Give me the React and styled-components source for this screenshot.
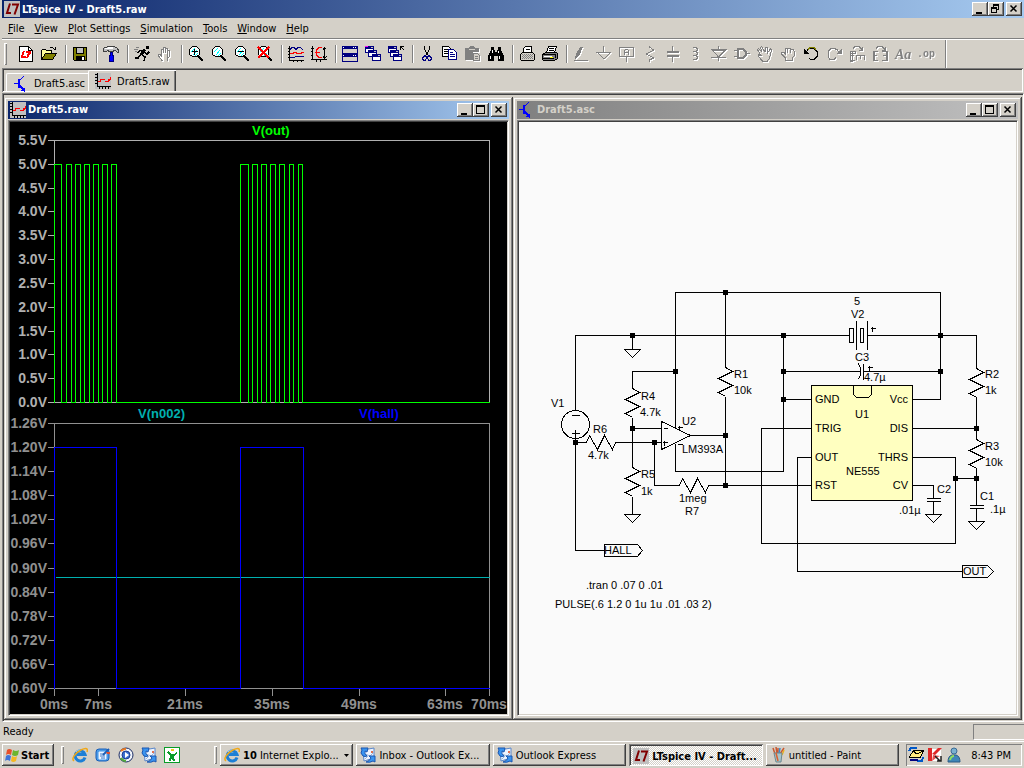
import React from "react";
import styled, { createGlobalStyle, css } from "styled-components";

const GlobalStyle = createGlobalStyle`
  * {
    box-sizing: border-box;
  }

  html, body, #root {
    height: 100%;
  }

  body {
    margin: 0;
    background: #d4d0c8;
    font-family: "DejaVu Sans Condensed", "Noto Sans", sans-serif;
    font-size: 11px;
    color: #000;
  }

  button {
    font: inherit;
    color: inherit;
    margin: 0;
    padding: 0;
    border: 0;
    background: none;
    text-align: left;
  }
`;

const raised = css`
  background: #d4d0c8;
  box-shadow: inset -1px -1px #404040, inset 1px 1px #fff,
    inset -2px -2px #808080;
`;

const sunken = css`
  box-shadow: inset 1px 1px #808080, inset -1px -1px #fff,
    inset 2px 2px #404040;
`;

const Desktop = styled.div`
  display: flex;
  flex-direction: column;
  height: 100vh;
  overflow: hidden;
`;

const TitleBar = styled.header`
  display: flex;
  align-items: center;
  flex: none;
  height: 18px;
  padding: 0 2px;
  margin-left: ${p => (p.$main ? "2px" : "0")};
  gap: 2px;
  color: ${p => (p.$inactive ? "#d4d0c8" : "#fff")};
  background: ${p =>
    p.$inactive
      ? "linear-gradient(90deg, #808080, #c0c0c0)"
      : "linear-gradient(90deg, #0a246a, #a6caf0)"};

  > h1,
  > h2 {
    flex: 1;
    min-width: 0;
    margin: 0;
    font-size: 11px;
    line-height: 18px;
    font-weight: bold;
    white-space: nowrap;
    overflow: hidden;
  }

  > h1 {
    padding-top: 1px;
  }
`;

const CaptionButtons = styled.div`
  display: flex;

  > button {
    ${raised}
    width: 16px;
    height: 14px;
  }

  > button:last-child {
    margin-left: 2px;
  }

  svg {
    display: block;
  }
`;

const MenuBar = styled.nav`
  display: flex;
  flex: none;
  height: 20px;
  padding-left: 3px;

  > button {
    padding: 0 5px;
    line-height: 22px;
  }
`;

const ToolBar = styled.div`
  display: flex;
  align-items: center;
  flex: none;
  height: 30px;
  margin-left: 2px;
  border-top: 1px solid #808080;
  box-shadow: inset 0 1px #fff;
  padding: 1px 0 0 2px;
`;

const Grip = styled.span`
  flex: none;
  width: 3px;
  height: ${p => p.$h || 22}px;
  box-shadow: inset 1px 1px #fff, inset -1px -1px #808080;
`;

const ToolGroup = styled.div`
  display: flex;
  align-items: center;
  border-right: 1px solid #808080;
  box-shadow: 1px 0 #fff;
  height: 18px;
  padding: 0 4px 0 3px;

  &:first-of-type {
    padding-left: 8px;
  }

  &:last-of-type {
    height: 28px;
    padding-right: 7px;
  }
`;

const ToolButton = styled.button`
  width: 23px;
  height: 22px;
  padding: 3px;

  svg {
    display: block;
    overflow: visible;
    filter: ${p => (p.disabled ? "drop-shadow(1px 1px 0 #fff)" : "none")};
  }
`;

const TabStrip = styled.div`
  ${sunken}
  display: flex;
  align-items: flex-end;
  flex: none;
  height: 24px;
  margin: 0 1px 1px 2px;
  padding: 2px 4px 1px;
`;

const Tab = styled.button`
  display: flex;
  align-items: center;
  gap: ${p => (p.$active ? 6 : 4)}px;
  height: ${p => (p.$active ? 21 : 18)}px;
  padding: ${p => (p.$active ? "0 6px" : "2px 3px 0 7px")};
  border-top: 1px solid #fff;
  border-left: 1px solid #fff;
  border-radius: 2px 0 0 0;
  box-shadow: ${p =>
    p.$active ? "inset -1px 0 #404040, inset -2px 0 #808080" : "none"};
`;

const MdiArea = styled.main`
  flex: 1;
  min-height: 0;
  display: grid;
  grid-template-columns: 1fr 1fr;
  margin-left: 2px;
  padding: 3px 1px 1px;
  border: 1px solid #808080;
  border-right-color: #fff;
  border-bottom-color: #fff;
  box-shadow: inset 1px 1px #404040;
`;

const ChildWindow = styled.section`
  display: flex;
  flex-direction: column;
  min-width: 0;
  min-height: 0;
  padding: 4px;
  box-shadow: inset -1px -1px #404040, inset 1px 1px #d4d0c8,
    inset -2px -2px #808080, inset 2px 2px #fff;
`;

const Canvas = styled.div`
  flex: 1;
  min-height: 0;
  margin-top: 1px;
  border: 1px solid #808080;
  border-right-color: #fff;
  border-bottom-color: #fff;
  padding: 1px;
  box-shadow: inset 1px 1px #404040;

  > svg {
    display: block;
    width: 100%;
    height: 100%;
    background: ${p => p.$color};
  }
`;

const AxisText = styled.text`
  font: bold 14px "Liberation Sans", Arial, sans-serif;
`;

const TraceText = styled.text`
  font: bold 13px "Liberation Sans", Arial, sans-serif;
`;

const PartText = styled.text`
  font: 11px "Liberation Sans", Arial, sans-serif;
`;

const StatusBar = styled.footer`
  display: flex;
  align-items: center;
  justify-content: space-between;
  flex: none;
  height: 19px;
  padding-left: 3px;

  > span {
    width: 51px;
    height: 16px;
    border-top: 1px solid #808080;
    border-left: 1px solid #808080;
    border-bottom: 1px solid #fff;
  }
`;

const TaskBar = styled.div`
  display: flex;
  align-items: center;
  flex: none;
  height: 27px;
  border-top: 1px solid #fff;
  padding: 1px 2px;
`;

const StartButton = styled.button`
  ${raised}
  display: flex;
  align-items: center;
  gap: 1px;
  width: 52px;
  height: 22px;
  padding: 0 2px;
  font-weight: bold;
  margin-right: 7px;
`;

const QuickLaunch = styled.div`
  display: flex;
  gap: 7px;
  width: 150px;
  padding-left: 8px;

  svg {
    display: block;
  }
`;

const TaskList = styled.div`
  display: flex;
  flex: 1;
  min-width: 0;
  gap: 3px;
  margin: 0 7px 0 3px;
`;

const TaskButton = styled.button`
  ${raised}
  display: flex;
  align-items: center;
  gap: 3px;
  flex: 1;
  min-width: 0;
  height: 22px;
  padding: 0 4px;

  > svg {
    flex: none;
  }

  > span {
    flex: 1;
    white-space: nowrap;
    overflow: hidden;
    text-overflow: ellipsis;
  }

  ${p =>
    p.$active &&
    css`
      ${sunken}
      font-weight: bold;
      padding-top: 2px;
      background: repeating-conic-gradient(#fff 0 25%, #d4d0c8 0 50%) 0 0 / 2px
        2px;
    `}
`;

const Tray = styled.div`
  display: flex;
  align-items: center;
  gap: 3px;
  width: 116px;
  height: 22px;
  padding: 0 2px;
  box-shadow: inset 1px 1px #808080, inset -1px -1px #fff;

  > time {
    flex: 1;
    text-align: right;
    padding-right: 9px;
    white-space: nowrap;
  }
`;

/* ---------- icons ---------- */

const Icon = ({ children, smooth }) => (
  <svg
    width="16"
    height="16"
    viewBox="0 0 16 16"
    fill="none"
    stroke="#000"
    shapeRendering={smooth ? "auto" : "crispEdges"}
    aria-hidden="true"
  >
    {children}
  </svg>
);

const LtLogo = () => (
  <Icon smooth>
    <path d="M0 0h16v16H0z" fill="#c0c0c0" stroke="none" />
    <path d="M6 2.500L3 12H7" stroke="#800000" strokeWidth="2" />
    <path d="M8 3.500H14L10.500 13.500" stroke="#800000" strokeWidth="2" />
  </Icon>
);

const WaveIcon = () => (
  <Icon>
    <path d="M0 0h16v16H0z" fill="#c0c0c0" stroke="none" />
    <path d="M2.500 0v13.500M2 13.500h14M0 1.500h2M0 4.500h2M0 7.500h2M0 10.500h2M4.500 14v2M7.500 14v2M10.500 14v2M13.500 14v2" />
    <path d="M3 8h2v-2h5v2h3v-2h2v-2h1v3h-1v1h-1v1h-4v-2h-4v2h-3z" fill="#f00" stroke="none" />
  </Icon>
);

const TransistorIcon = () => (
  <Icon>
    <path d="M0 7.500h4M10 0l-5 5" stroke="#00f" />
    <path d="M4 3h2v9H4zM6 9h1v1h1v1h1v1h2v4h-1v-1H7v-1h1v-1H7v-1H6z" fill="#00f" stroke="none" />
  </Icon>
);

const Lens = ({ children }) => (
  <Icon>
    <path d="M4 1h5l3 3v4l-3 3H5L1 8V4z" fill="#fff" stroke="none" />
    <path d="M3 6l4-4M5 9l4-5M7 10l3-3" stroke="#0ff" />
    <path d="M4 .500h5M3.500 1v1M9.500 1v1M2 2.500h1M10 2.500h1M1.500 3v6M11.500 3v6M2 9.500h2M9 9.500h2M4 10.500h5" />
    <path d="M10 10l5 5" strokeWidth="2" />
    {children}
  </Icon>
);

const MiniWindow = ({ x, y }) => (
  <g>
    <path d={`M${x} ${y}h9v7h-9z`} fill="#000080" stroke="none" />
    <path d={`M${x + 1} ${y + 3}h7v3h-7z`} fill="#fff" stroke="none" />
    <path d={`M${x + 6} ${y + 1}h2v1h-2z`} fill="#c0c0c0" stroke="none" />
  </g>
);

const hand =
  "M5.500 15L1.500 10V8.500H3L4.500 10V3.500H6V7M6.500 7V1.500H8V7M8.500 7V2.500H10V8M10.500 8V4.500H12V11L10.500 13V15z";

const icons = {
  newFile: (
    <Icon>
      <path d="M1.500 .500h9l4 4v11h-13z" fill="#fff" />
      <path d="M10.500 .500v4h4" />
      <path
        d="M5 5h2l-2 5h3v2H3v-2zM8 5h5v2l-3 5H8l2-5H8z"
        fill="#f00"
        stroke="none"
      />
    </Icon>
  ),
  open: (
    <Icon>
      <path d="M.500 13.500v-9l1-1h3l1 1h5v3" fill="#ffff9c" />
      <path d="M.500 13.500l4-6h11l-4 6z" fill="#808000" />
      <path d="M9 1.500h3M12 2.500h1M13 3.500h2M14.500 1v3" />
    </Icon>
  ),
  save: (
    <Icon>
      <path d="M1.500 1.500h13v13h-12l-1-1z" fill="#808000" />
      <path d="M4 2h8v6H4z" fill="#c0c0c0" stroke="none" />
      <path d="M4 10h9v4H4z" fill="#000" stroke="none" />
      <path d="M10 11h2v3h-2z" fill="#fff" stroke="none" />
      <path d="M4.500 2v5.500h7V2" />
    </Icon>
  ),
  hammer: (
    <Icon>
      <path
        d="M.500 2.500l1-1h2l1-1h7l3 2 1 2v2h-1l-2-2h-2v1h-5v-1h-1l-1 1h-3z"
        fill="#c0c0c0"
        stroke="#404040"
      />
      <path d="M2 2.500h8M5 1.500h5" stroke="#fff" />
      <path d="M7.500 6h2v3h1v6h-4v-6h1z" fill="#00f" stroke="#000080" />
    </Icon>
  ),
  run: (
    <Icon>
      <path d="M12 0h3v3h-3z" fill="#000" stroke="none" />
      <path d="M10.500 3.500L7 9" strokeWidth="3" />
      <path d="M9 4.500H5.500L4 7M10 6l3 2 2-2M8 9l3 2-1 4M6 9l-2 3H1" strokeWidth="1.500" />
      <path d="M2 1h3M0 3h4M1 5h2" stroke="#808080" />
    </Icon>
  ),
  hand: (
    <Icon>
      <path d={hand} fill="#fff" stroke="#808080" />
    </Icon>
  ),
  zoomIn: (
    <Lens>
      <path d="M3.500 5.500h6M6.500 3v6" />
    </Lens>
  ),
  zoomPan: <Lens />,
  zoomOut: (
    <Lens>
      <path d="M3.500 5.500h6" />
    </Lens>
  ),
  zoomFit: (
    <Lens>
      <path d="M1 1l11 11M12 1L1 12" stroke="#f00" strokeWidth="1.500" />
    </Lens>
  ),
  autoRange: (
    <Icon>
      <path d="M1.500 0v14.500M1 14.500h15M0 2.500h2M0 5.500h2M0 8.500h2M0 11.500h2M5.500 14v2M9.500 14v2M13.500 14v2" />
      <path d="M2 3.500l2-2h2l2 2 2-2h2l3 2M2 11.500h4l2-1h8" stroke="#000080" />
      <path d="M2 7.500h3v-1h3v1h5v-1h3" stroke="#f00" />
    </Icon>
  ),
  yRange: (
    <Icon>
      <path d="M1.500 0v13.500M0 13.500h16M0 2.500h3M0 5.500h2M0 9.500h2M5.500 13v3M9.500 13v3M13.500 1v12M12 3.500l1.500-2 2 2M12 10.500l1.500 2 2-2" />
      <path d="M11 1.500H8L5.500 4v5L8 11.500h3M4 6.500h5" stroke="#f00" />
    </Icon>
  ),
  tile: (
    <Icon>
      <path d="M0 0h16v16H0z" fill="#000080" stroke="none" />
      <path d="M1 3h14v4H1zM1 11h14v4H1z" fill="#d4d0c8" stroke="none" />
      <path d="M11 1.500h1M13 1.500h1M11 9.500h1M13 9.500h1M1 1.500h1M1 9.500h1" stroke="#fff" />
    </Icon>
  ),
  cascade: (
    <Icon>
      <MiniWindow x={0} y={0} />
      <MiniWindow x={3} y={4} />
      <MiniWindow x={7} y={8} />
      <path d="M0 .500h3" stroke="#f0f" />
    </Icon>
  ),
  closeAll: (
    <Icon>
      <MiniWindow x={0} y={0} />
      <MiniWindow x={2} y={4} />
      <MiniWindow x={5} y={8} />
      <path d="M12.500 4V.500H16M13 1l3 3" />
    </Icon>
  ),
  cut: (
    <Icon>
      <path d="M5.500 0v3l3 6M10.500 0v3l-3 6" />
      <path d="M4.500 10.500l2-1 1 2-1 3h-2l-1-2zM9.500 9.500l2 1 1 2-1 2h-2l-1-3z" stroke="#000080" />
    </Icon>
  ),
  copy: (
    <Icon>
      <path d="M.500 .500h6l2 2v8h-8z" fill="#fff" />
      <path d="M2 3.500h4M2 5.500h5M2 7.500h5" />
      <path d="M6.500 3.500h5l3 3v7h-8z" fill="#fff" stroke="#000080" />
      <path d="M8 6.500h3M8 8.500h5M8 10.500h5" stroke="#000080" />
    </Icon>
  ),
  paste: (
    <Icon>
      <path d="M0 2h4l1-2h4l1 2h4v4H8v8H0z" fill="#808080" stroke="none" />
      <path d="M4 3.500h6" stroke="#d4d0c8" />
      <path d="M8.500 7.500h4l2 2v5h-6z" fill="#d4d0c8" stroke="#808080" />
      <path d="M10 10.500h3M10 12.500h3" stroke="#808080" />
    </Icon>
  ),
  find: (
    <Icon>
      <path
        d="M3 1h3v3h1v2h2V4h1V1h3v3l3 6v5h-6v-5H6v5H0v-5l3-6z"
        fill="#000"
        stroke="none"
      />
      <path d="M4.500 4v3M2.500 10v3M10.500 5v2M11.500 10v3" stroke="#fff" />
    </Icon>
  ),
  printSetup: (
    <Icon>
      <path d="M4.500 6.500v-4l2-2h6v6" fill="#fff" />
      <path d="M1.500 8.500l2-2h10l2 2v5l-1 1h-12l-1-1z" fill="#d4d0c8" />
      <path d="M3 8.500h11M3 10.500h11M3 12.500h11" stroke="#808080" strokeDasharray="1 1" />
      <path d="M4 9.500h10M4 11.500h10" stroke="#808080" strokeDasharray="1 1" />
      <path d="M7 3.500h4" />
    </Icon>
  ),
  print: (
    <Icon>
      <path d="M4.500 6.500l2-6h8l-2 6z" fill="#fff" />
      <path d="M7 2.500h5M7 4.500h5" />
      <path d="M.500 8.500l3-2h11l1 1v5l-3 2h-11l-1-1z" fill="#808080" />
      <path d="M1 8.500h12v3M1 12.500h11" />
      <path d="M2 10.500h8" stroke="#fff" />
      <path d="M8 11h3v1H8z" fill="#ff0" stroke="none" />
    </Icon>
  ),
  wire: (
    <Icon>
      <path d="M7 1h3L6 10l-4 3 1-5z" fill="#808080" stroke="none" />
      <path d="M1 14.500h14" stroke="#808080" />
    </Icon>
  ),
  ground: (
    <Icon>
      <path d="M7.500 0v6M0 6.500h15M2 7l6 6 6-6" stroke="#808080" />
    </Icon>
  ),
  label: (
    <Icon>
      <path d="M.500 1.500h14v9H.500zM7.500 11v5M5.500 9V4.500l1-1h2l1 1V9M6 6.500h3" stroke="#808080" />
    </Icon>
  ),
  resistor: (
    <Icon>
      <path d="M7.500 0v1l4 3-7 4 7 4-4 2v2" stroke="#808080" />
    </Icon>
  ),
  capacitor: (
    <Icon>
      <path d="M7.500 0v5M7.500 10v6" stroke="#808080" />
      <path d="M2 6h12M2 10h12" stroke="#808080" strokeWidth="2" />
    </Icon>
  ),
  inductor: (
    <Icon>
      <path
        d="M5 1.500h3l1 1v2l-1 1H5M6 5.500h2l1 1v2l-1 1H5M6 9.500h2l1 1v2l-1 1H5"
        stroke="#808080"
      />
    </Icon>
  ),
  diode: (
    <Icon>
      <path d="M7.500 0v3M1 3.500h14L7.500 11zM0 11.500h15M7.500 11v4" stroke="#808080" />
      <path d="M2 4h12" stroke="#808080" strokeWidth="2" />
    </Icon>
  ),
  gate: (
    <Icon>
      <path d="M0 4.500h4M0 10.500h4M12 7.500h4" stroke="#808080" />
      <path d="M4 3h5l3 3v3l-3 3H4z" stroke="#808080" strokeWidth="2" />
    </Icon>
  ),
  move: (
    <Icon>
      <path
        d="M5.500 15L1 10V8.500l3 1L.500 3.500l1-1L5 6 3.500 1.500l1-1L8 6l1-4.500h1.500V7l3-4 1 1-2 8-2 3z"
        stroke="#808080"
      />
    </Icon>
  ),
  drag: (
    <Icon>
      <path d="M5.500 14v-2L1.500 8V6.500H4l1 1V3l1-1 2 1 2-1 1 1h2l1 2v5l-2 2v2zM7.500 3v4M10.500 3v4" stroke="#808080" />
    </Icon>
  ),
  undo: (
    <Icon>
      <path d="M3 6.500l2-3 2-1h4l3 3v5l-3 3H8l-2-1" />
      <path d="M5 3.500l2-2h4l2 2" stroke="#808000" />
      <path d="M1 3v5h5z" fill="#000" stroke="none" />
    </Icon>
  ),
  redo: (
    <Icon>
      <path d="M13 6.500l-2-3-3-1H5l-3 3v5l2 3h4l2-2" stroke="#808080" />
      <path d="M15.500 3v5h-5z" fill="#808080" stroke="none" />
    </Icon>
  ),
  rotate: (
    <Icon>
      <path d="M4 2.500l2-2h4l3 3M13.500 1v3H10" stroke="#808080" />
      <path d="M6 5.500H1V7h5zM1 5v10h2V5zM1 9.500h4M1 14.500h5M7 9.500h9M7.500 9v5M11.500 9v4M15.500 9v5" stroke="#808080" />
    </Icon>
  ),
  mirror: (
    <Icon>
      <path d="M4 2.500l2-2h4l3 3M13.500 1v3H10" stroke="#808080" />
      <path d="M1 5.500h5M1 5v10M2 5v10M1 9.500h4M1 14.500h5M10 5.500h5M14 5v10M15 5v10M11 9.500h4M10 14.500h5" stroke="#808080" />
    </Icon>
  ),
  text: (
    <svg width="16" height="16" viewBox="0 0 16 16" aria-hidden="true">
      <text
        x="0"
        y="13"
        fill="#808080"
        fontFamily="Liberation Serif, serif"
        fontSize="14"
        fontWeight="bold"
        fontStyle="italic"
      >
        Aa
      </text>
    </svg>
  ),
  directive: (
    <svg width="16" height="16" viewBox="0 0 16 16" aria-hidden="true">
      <text
        x="-1"
        y="11"
        fill="#808080"
        fontFamily="Liberation Mono, monospace"
        fontSize="10"
        fontWeight="bold"
      >
        .op
      </text>
    </svg>
  )
};

const StartFlag = () => (
  <Icon smooth>
    <g stroke="none">
      <path d="M3 3q2-2 5 0L7 8q-3-2-5 0z" fill="#e8502a" />
      <path d="M9 3q3 2 6 0l-1 5q-3 2-6 0z" fill="#6cb52d" />
      <path d="M2 9q2-2 5 0l-1 5q-3-2-5 0z" fill="#3f74d8" />
      <path d="M8 9q3 2 5 0l-1 5q-3 2-5 0z" fill="#f5b820" />
    </g>
  </Icon>
);

const IeIcon = () => (
  <Icon smooth>
    <path d="M13 10.500a5 5 0 1 1 0-3H5" stroke="#1c7fd6" strokeWidth="3" />
    <path d="M4 5q1-2 4-2" stroke="#8fd0ff" />
    <path d="M2 14C-1 12 3 6 9 3s7-1 6 2" stroke="#f0a818" strokeWidth="1.500" />
  </Icon>
);

const DesktopIcon = () => (
  <Icon smooth>
    <rect x="1" y="2" width="13" height="12" rx="3" fill="#4a9be8" stroke="#1a5fb8" />
    <path d="M4 5h7v7H4z" fill="#fff" stroke="#dbeaff" />
    <path d="M5 7h4M5 9h5M6 11h4" stroke="#2f6fc4" />
    <path d="M8 8l6-6" stroke="#1a5fb8" strokeWidth="2" />
    <path d="M11 5h4v2h-3z" fill="#e05030" stroke="none" />
  </Icon>
);

const MediaIcon = () => (
  <Icon smooth>
    <circle cx="8" cy="8" r="7" fill="#f0f4fa" stroke="#1e2f66" />
    <path d="M3 4a6 6 0 0 1 5-2" stroke="#e87820" strokeWidth="2" />
    <path d="M3 11a6 6 0 0 0 5 3" stroke="#4fa83a" strokeWidth="2" />
    <circle cx="8" cy="8" r="4" fill="#3a6fd0" stroke="#1c3c90" />
    <path d="M7 5l4 3-4 3z" fill="#fff" stroke="none" />
  </Icon>
);

const OutlookIcon = () => (
  <Icon smooth>
    <path d="M3 3l11-2v10L4 14z" fill="#eef4ff" stroke="#5a86c8" />
    <path d="M5 7l5 2 4-4M5 12l3-3" stroke="#9ab4d8" />
    <path d="M11 4h2v2h-2z" fill="#e07050" stroke="none" />
    <path d="M8 1H1l1 2-1 3 2 3q2 1 4 0Q4 7 5 4l2 1z" fill="#3a94f0" stroke="#1a56b0" />
    <path d="M9 9h6v6l-2-1q-3 2-7 1 4-1 5-4z" fill="#3a94f0" stroke="#1a56b0" />
  </Icon>
);

const FigureIcon = () => (
  <Icon>
    <path d="M.500 .500h15v15H.500z" fill="#fff" stroke="#0a9c28" />
    <path d="M7 2h3v2H7z" fill="#f0c818" stroke="none" />
    <path d="M4 4l3 3h3l2-2 1 1-3 3 1 5h-2l-1-3-1 3H5l1-5-3-4z" fill="#0a9c28" stroke="none" />
  </Icon>
);

const PaintIcon = () => (
  <Icon smooth>
    <path d="M5 7L3 1M8 7V1M10 7l4-6M7 7L6 0" stroke="#c85830" strokeWidth="1.500" />
    <path d="M9 7l1-6" stroke="#3a8ad0" strokeWidth="1.500" />
    <path d="M12 8l2-5" stroke="#e8b020" strokeWidth="1.500" />
    <path d="M4 6h8l-1 9H6z" fill="#a8c4c8" stroke="#6b8890" />
    <path d="M6 6l2 8" stroke="#d86030" strokeWidth="1.500" />
  </Icon>
);

const SyncTrayIcon = () => (
  <Icon>
    <path d="M1.500 9.500l4-6h10l-3 7h-11z" fill="#ffe880" />
    <path d="M5 4l4 3 6-3" />
    <path d="M1 4l2-3h6M9 14h5l1-4" stroke="#0058c8" strokeWidth="2" />
    <path d="M2 12h8v2H2z" fill="#000080" stroke="none" />
  </Icon>
);

const KasperskyIcon = () => (
  <Icon smooth>
    <path d="M1 2h13v12H1z" fill="#fff" stroke="none" />
    <path d="M1 1h4v13H1zM5 7l6-6h4l-7 7z" fill="#e02828" stroke="none" />
    <path d="M5 14l1-6 7 1-4 2z" fill="#e85050" stroke="none" />
    <path d="M8 9l5 5M14 9v5h-4" stroke="#202020" strokeWidth="1.500" />
  </Icon>
);

const MessengerIcon = () => (
  <Icon smooth>
    <circle cx="8" cy="4" r="3" fill="#7ab0d0" stroke="#3a6a94" />
    <path d="M2 15q0-6 4-7h4q4 1 4 7z" fill="#3f86b8" stroke="#2a5a84" />
    <path d="M4 13q1-4 4-4" stroke="#8fe060" strokeWidth="2" />
  </Icon>
);

/* ---------- window parts ---------- */

const WindowButtons = ({ restore }) => (
  <CaptionButtons>
    <button aria-label="Minimize">
      <svg width="16" height="14">
        <path d="M4 10h6v2H4z" />
      </svg>
    </button>
    <button aria-label={restore ? "Restore" : "Maximize"}>
      <svg width="16" height="14" fill="none" stroke="#000" shapeRendering="crispEdges">
        {restore ? (
          <>
            <path d="M5.500 5V2.500h5v5H9M3.500 5.500h5v5h-5z" />
            <path d="M5 3h6M3 6h6" strokeWidth="2" />
          </>
        ) : (
          <>
            <path d="M3.500 2.500h8v8h-8z" />
            <path d="M3 3h9" strokeWidth="2" />
          </>
        )}
      </svg>
    </button>
    <button aria-label="Close">
      <svg width="16" height="14" fill="none" stroke="#000" strokeWidth="1.500">
        <path d="M4.500 3.500l6 6M10.500 3.500l-6 6" />
      </svg>
    </button>
  </CaptionButtons>
);

/* ---------- waveform viewer ---------- */

// both drawings share one coordinate space, the viewBox picks the pane
const upperTicks = [140, 164, 188, 211, 235, 259, 283, 307, 331, 354, 378, 402];
const upperLabels = ["5.5V", "5.0V", "4.5V", "4.0V", "3.5V", "3.0V", "2.5V", "2.0V", "1.5V", "1.0V", "0.5V", "0.0V"];
const lowerTicks = [423, 447, 471, 495, 519, 543, 568, 592, 616, 640, 664, 688];
const lowerLabels = ["1.26V", "1.20V", "1.14V", "1.08V", "1.02V", "0.96V", "0.90V", "0.84V", "0.78V", "0.72V", "0.66V", "0.60V"];
const timeTicks = [
  [54, "0ms"],
  [98, "7ms"],
  [185, "21ms"],
  [272, "35ms"],
  [359, "49ms"],
  [445, "63ms"],
  [489, "70ms"]
];

const pulses = [
  [54, 61], [66, 71], [75, 80], [84, 89], [93, 98], [102, 107], [111, 116],
  [240, 248], [252, 257], [261, 266], [270, 275], [279, 284], [289, 293], [298, 302]
];

const outTrace =
  pulses.map(([a, b], i) => `${i ? "L" : "M"}${a} 402V164H${b}V402`).join("") +
  "H489";

const Waveforms = () => (
  <svg viewBox="10 122 497 592" role="img" aria-label="Waveforms">
    <g transform="translate(.5 .5)" fill="none" shapeRendering="crispEdges">
      <path d="M54 140H489V402H54z" stroke="#b0b0b0" />
      <path d={upperTicks.map(y => `M47 ${y}h7`).join("")} stroke="#b0b0b0" />
      <path d={outTrace} stroke="#0f0" />
      <path d="M54 423H489V688H54z" stroke="#909090" />
      <path d={lowerTicks.map(y => `M47 ${y}h7`).join("")} stroke="#909090" />
      <path d={timeTicks.map(t => `M${t[0]} 688v7`).join("")} stroke="#909090" />
      <path d="M55 577H489" stroke="#00b0b0" />
      <path d="M54 688V447H116V688H240V447H303V688H489" stroke="#00f" />
    </g>
    {upperTicks.map((y, i) => (
      <AxisText key={y} x="47" y={y + 5} textAnchor="end" fill="#b0b0b0">
        {upperLabels[i]}
      </AxisText>
    ))}
    {lowerTicks.map((y, i) => (
      <AxisText key={y} x="47" y={y + 5} textAnchor="end" fill="#909090">
        {lowerLabels[i]}
      </AxisText>
    ))}
    {timeTicks.map(([x, label]) => (
      <AxisText key={x} x={x} y="709" textAnchor="middle" fill="#909090">
        {label}
      </AxisText>
    ))}
    <TraceText x="252" y="135" fill="#0f0">V(out)</TraceText>
    <TraceText x="138" y="418" fill="#00b0b0">V(n002)</TraceText>
    <TraceText x="359" y="418" fill="#00f">V(hall)</TraceText>
  </svg>
);

/* ---------- schematic ---------- */

const wires = [
  "M575 410V335H849M867 335H976V368",
  "M675 427V292H940V399H912",
  "M632 335V349M675 371H632V388M632 417V467M632 428H661M632 496V514",
  "M575 438V550H604M575 442H586M615 442H661",
  "M690 435H725M725 292V367M725 396V485",
  "M654 442V485H679M708 485H811",
  "M675 443V471H783V335M783 399H811",
  "M783 371H860M863 371H940",
  "M811 428H761V543H955V457H912M955 478H976",
  "M811 457H797V571H962",
  "M912 428H976M976 396V439M976 467V505M976 508V521",
  "M912 485H933V498M933 501V514"
];

const junctions = [
  [632, 335], [783, 335], [940, 335], [725, 292], [675, 371], [783, 371],
  [940, 371], [783, 399], [632, 428], [976, 428], [725, 435], [575, 442],
  [654, 442], [725, 485], [955, 478], [976, 478]
];

const grounds = [[632, 349], [632, 514], [933, 514], [976, 521]];

const vertical = [[632, 388], [632, 467], [725, 367], [976, 368], [976, 439]];
const horizontal = [[586, 442], [679, 485]];

const plusSigns = [[664, 442], [679, 427], [872, 328], [869, 367]];

const partLabels = [
  [551, 407, "V1"], [593, 433, "R6"], [588, 459, "4.7k"],
  [641, 400, "R4"], [640, 416, "4.7k"], [641, 478, "R5"], [641, 495, "1k"],
  [682, 425, "U2"], [682, 453, "LM393A"], [734, 378, "R1"], [734, 394, "10k"],
  [679, 502, "1meg"], [685, 515, "R7"], [854, 305, "5"], [851, 318, "V2"],
  [855, 361, "C3"], [864, 381, "4.7µ"], [985, 378, "R2"], [985, 394, "1k"],
  [985, 450, "R3"], [985, 466, "10k"], [980, 500, "C1"], [990, 513, ".1µ"],
  [937, 493, "C2"], [899, 514, ".01µ"], [855, 418, "U1"], [846, 475, "NE555"],
  [815, 403, "GND"], [815, 432, "TRIG"], [815, 461, "OUT"], [815, 489, "RST"],
  [604, 554, "HALL"], [963, 575, "OUT"],
  [586, 589, ".tran 0 .07 0 .01"],
  [555, 608, "PULSE(.6 1.2 0 1u 1u .01 .03 2)"]
];

const rightPins = [[403, "Vcc"], [432, "DIS"], [461, "THRS"], [489, "CV"]];

const Schematic = () => (
  <svg viewBox="519 122 497 592" role="img" aria-label="Schematic">
    <g
      transform="translate(.5 .5)"
      fill="none"
      stroke="#000"
      shapeRendering="crispEdges"
    >
      <path d="M811 385H912V500H811z" fill="#ffffc0" />
      <path d="M853 385V394L856 397H868L871 394V385" />
      {wires.map(d => (
        <path key={d} d={d} />
      ))}
      {junctions.map(([x, y]) => (
        <rect key={`${x}-${y}`} x={x - 2} y={y - 2} width="4" height="4" fill="#000" />
      ))}
      {grounds.map(([x, y]) => (
        <path key={`${x}-${y}`} d={`M${x - 8} ${y}h16l-8 8z`} />
      ))}
      {vertical.map(([x, y]) => (
        <path key={`${x}-${y}`} d={`M${x} ${y}l7 4-14 7 14 7-14 7 7 4`} />
      ))}
      {horizontal.map(([x, y]) => (
        <path key={`${x}-${y}`} d={`M${x} ${y}l3-7 8 14 7-14 8 14 3-7`} />
      ))}
      {plusSigns.map(([x, y]) => (
        <path key={`${x}-${y}`} d={`M${x - 2} ${y}h5M${x} ${y - 2}v5`} />
      ))}
      <circle cx="575" cy="424" r="14" />
      <path d="M571 415H579M571 433H579M575 429V438" />
      <path d="M661 421L690 435L661 449z" />
      <path d="M663 428H667M677 444H682" />
      <path d="M849 328H853V342H849zM860 328H863V342H860zM856 320V349M867 320V349" />
      <path d="M858 363Q863 371 858 379M863 363V379" />
      <path d="M926 498H940M926 501H940M969 505H983M969 508H983" />
      <path d="M604 544H637L642 550L637 556H604zM962 565H987L993 571L987 577H962z" />
    </g>
    {partLabels.map(([x, y, label]) => (
      <PartText key={`${x}-${y}`} x={x} y={y}>
        {label}
      </PartText>
    ))}
    {rightPins.map(([y, label]) => (
      <PartText key={label} x="908" y={y} textAnchor="end">
        {label}
      </PartText>
    ))}
  </svg>
);

/* ---------- page ---------- */

const menus = ["File", "View", "Plot Settings", "Simulation", "Tools", "Window", "Help"];

const toolGroups = [
  ["newFile", "open"],
  ["save"],
  ["hammer"],
  ["run", "hand"],
  ["zoomIn", "zoomPan", "zoomOut", "zoomFit"],
  ["autoRange", "yRange"],
  ["tile", "cascade", "closeAll"],
  ["cut", "copy", "paste", "find"],
  ["printSetup", "print"],
  [
    "wire", "ground", "label", "resistor", "capacitor", "inductor", "diode",
    "gate", "move", "drag", "undo", "redo", "rotate", "mirror", "text", "directive"
  ]
];

const disabledTools = [
  "hand", "paste", "wire", "ground", "label", "resistor", "capacitor",
  "inductor", "diode", "gate", "move", "drag", "redo", "rotate", "mirror",
  "text", "directive"
];

const App = () => (
  <Desktop>
    <GlobalStyle />
    <TitleBar $main>
      <LtLogo />
      <h1>LTspice IV - Draft5.raw</h1>
      <WindowButtons restore />
    </TitleBar>
    <MenuBar>
      {menus.map(name => (
        <button key={name}>
          <u>{name[0]}</u>
          {name.slice(1)}
        </button>
      ))}
    </MenuBar>
    <ToolBar>
      <Grip />
      {toolGroups.map(group => (
        <ToolGroup key={group[0]}>
          {group.map(name => (
            <ToolButton
              key={name}
              aria-label={name}
              disabled={disabledTools.includes(name)}
            >
              {icons[name]}
            </ToolButton>
          ))}
        </ToolGroup>
      ))}
    </ToolBar>
    <TabStrip>
      <Tab>
        <TransistorIcon />
        Draft5.asc
      </Tab>
      <Tab $active>
        <WaveIcon />
        Draft5.raw
      </Tab>
    </TabStrip>
    <MdiArea>
      <ChildWindow>
        <TitleBar>
          <WaveIcon />
          <h2>Draft5.raw</h2>
          <WindowButtons />
        </TitleBar>
        <Canvas $color="#000">
          <Waveforms />
        </Canvas>
      </ChildWindow>
      <ChildWindow>
        <TitleBar $inactive>
          <TransistorIcon />
          <h2>Draft5.asc</h2>
          <WindowButtons />
        </TitleBar>
        <Canvas $color="#fafafa">
          <Schematic />
        </Canvas>
      </ChildWindow>
    </MdiArea>
    <StatusBar>
      Ready
      <span />
    </StatusBar>
    <TaskBar>
      <StartButton>
        <StartFlag />
        Start
      </StartButton>
      <Grip $h={18} />
      <QuickLaunch>
        <IeIcon />
        <DesktopIcon />
        <MediaIcon />
        <OutlookIcon />
        <FigureIcon />
      </QuickLaunch>
      <Grip $h={18} />
      <TaskList>
        <TaskButton>
          <IeIcon />
          <span>
            <b>10</b> Internet Explo...
          </span>
          <svg width="5" height="3" aria-hidden="true">
            <path d="M0 0h5L2.500 3z" />
          </svg>
        </TaskButton>
        <TaskButton>
          <OutlookIcon />
          <span>Inbox - Outlook Ex...</span>
        </TaskButton>
        <TaskButton>
          <OutlookIcon />
          <span>Outlook Express</span>
        </TaskButton>
        <TaskButton $active>
          <LtLogo />
          <span>LTspice IV - Draft...</span>
        </TaskButton>
        <TaskButton>
          <PaintIcon />
          <span>untitled - Paint</span>
        </TaskButton>
      </TaskList>
      <Tray>
        <SyncTrayIcon />
        <KasperskyIcon />
        <MessengerIcon />
        <time>8:43 PM</time>
      </Tray>
    </TaskBar>
  </Desktop>
);

export default App;
